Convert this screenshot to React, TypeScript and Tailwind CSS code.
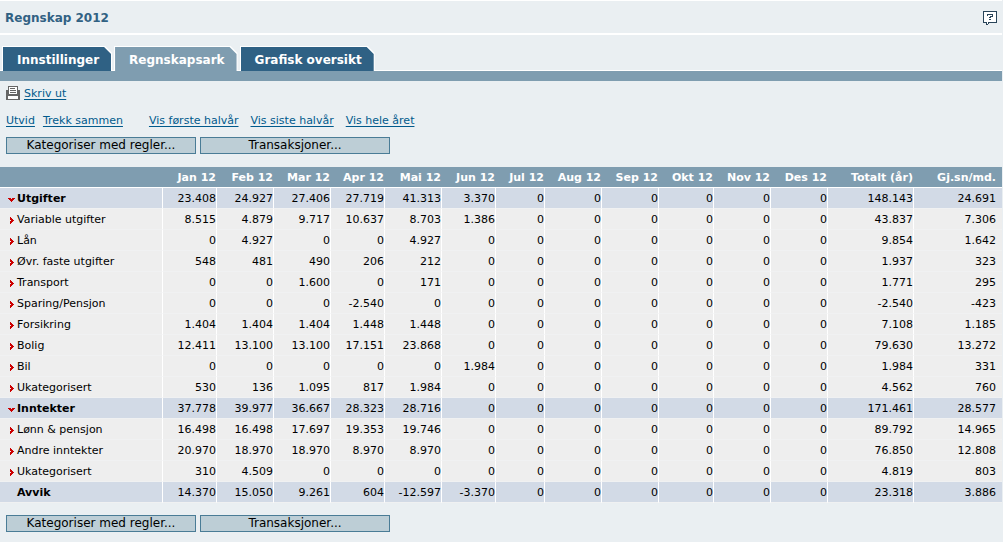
import { clsx } from "clsx";

type Row = {
  name: string;
  values: string[];
  kind: "group" | "item" | "sum";
};

const columns = [
  "Jan 12",
  "Feb 12",
  "Mar 12",
  "Apr 12",
  "Mai 12",
  "Jun 12",
  "Jul 12",
  "Aug 12",
  "Sep 12",
  "Okt 12",
  "Nov 12",
  "Des 12",
  "Totalt (år)",
  "Gj.sn/md.",
];

const columnWidths = [
  "w-[163px]",
  "w-[54px]",
  "w-[57px]",
  "w-[57px]",
  "w-[54px]",
  "w-[57px]",
  "w-[54px]",
  "w-[49px]",
  "w-[57px]",
  "w-[57px]",
  "w-[55px]",
  "w-[57px]",
  "w-[57px]",
  "w-[86px]",
  "w-[88px]",
];

// Jan-Jun, total and monthly average; Jul-Des have no bookings yet
function row(kind: Row["kind"], name: string, booked: string, totals: string): Row {
  return {
    kind,
    name,
    values: [...booked.split(" "), "0", "0", "0", "0", "0", "0", ...totals.split(" ")],
  };
}

const rows: Row[] = [
  row("group", "Utgifter", "23.408 24.927 27.406 27.719 41.313 3.370", "148.143 24.691"),
  row("item", "Variable utgifter", "8.515 4.879 9.717 10.637 8.703 1.386", "43.837 7.306"),
  row("item", "Lån", "0 4.927 0 0 4.927 0", "9.854 1.642"),
  row("item", "Øvr. faste utgifter", "548 481 490 206 212 0", "1.937 323"),
  row("item", "Transport", "0 0 1.600 0 171 0", "1.771 295"),
  row("item", "Sparing/Pensjon", "0 0 0 -2.540 0 0", "-2.540 -423"),
  row("item", "Forsikring", "1.404 1.404 1.404 1.448 1.448 0", "7.108 1.185"),
  row("item", "Bolig", "12.411 13.100 13.100 17.151 23.868 0", "79.630 13.272"),
  row("item", "Bil", "0 0 0 0 0 1.984", "1.984 331"),
  row("item", "Ukategorisert", "530 136 1.095 817 1.984 0", "4.562 760"),
  row("group", "Inntekter", "37.778 39.977 36.667 28.323 28.716 0", "171.461 28.577"),
  row("item", "Lønn & pensjon", "16.498 16.498 17.697 19.353 19.746 0", "89.792 14.965"),
  row("item", "Andre inntekter", "20.970 18.970 18.970 8.970 8.970 0", "76.850 12.808"),
  row("item", "Ukategorisert", "310 4.509 0 0 0 0", "4.819 803"),
  row("sum", "Avvik", "14.370 15.050 9.261 604 -12.597 -3.370", "23.318 3.886"),
];

function HelpIcon() {
  return (
    <svg width="14" height="14" viewBox="0 0 14 14" shapeRendering="crispEdges" aria-hidden="true">
      <path fill="#fff" d="M1 1h12v10H1zM4 11h1v2H4z" />
      <path
        fill="#294459"
        fillRule="evenodd"
        d="M0 0h14v12H6v1H5v1H3v-2H0zM1 1v10h3v2h1v-2h8V1z"
      />
      <path fill="#294459" d="M4 3h6v3H7V5h2V4H5v1H4zM6 6h2v1H6zM6 8h2v1H6z" />
    </svg>
  );
}

function PrinterIcon() {
  return (
    <svg width="14" height="14" viewBox="0 0 14 14" shapeRendering="crispEdges" aria-hidden="true">
      <path fill="#666" d="M2 0h10v4h2v10H0V4h2z" />
      <path fill="#fff" d="M3 1h8v7H3zM2 10h10v3H2z" />
      <path fill="#666" d="M4 2h5v1H4zM4 4h6v1H4zM4 6h6v1H4z" />
    </svg>
  );
}

function Arrow({ open }: { open: boolean }) {
  return (
    <svg width="7" height="7" viewBox="0 0 7 7" shapeRendering="crispEdges" aria-hidden="true">
      <path
        fill="#c00"
        d={
          open
            ? "M0 2h3v1h1V2h3v1H6v1H5v1H4v1H3V5H2V4H1V3H0z"
            : "M2 0h1v1h1v1h1v1h1v1H5v1H4v1H3v1H2V4h1V3H2z"
        }
      />
      {!open && <path fill="#c00" d="M2 1h2v2H2zM2 4h2v2H2zM3 3h2v1H3z" />}
    </svg>
  );
}

function Tab({ label, active = false }: { label: string; active?: boolean }) {
  return (
    <a
      href="#"
      className="-mb-px block bg-white px-px pt-px text-[12px] font-bold text-white [clip-path:polygon(0_0,calc(100%-7px)_0,100%_7px,100%_100%,0_100%)]"
    >
      <span
        className={clsx(
          "block h-6 pr-3 pl-3.5 leading-[26px]",
          "[clip-path:polygon(0_0,calc(100%-7px)_0,100%_7px,100%_100%,0_100%)]",
          active ? "bg-[#7f9db0]" : "bg-[#2f6184]"
        )}
      >
        {label}
      </span>
    </a>
  );
}

function Actions() {
  const button =
    "h-[17px] w-[190px] border border-[#4a7c96] bg-[#bdced6] text-[12px] leading-[15px] text-black";
  return (
    <div className="flex gap-1 px-1.5">
      <button type="button" className={button}>
        Kategoriser med regler...
      </button>
      <button type="button" className={button}>
        Transaksjoner...
      </button>
    </div>
  );
}

function Link({ children }: { children: string }) {
  return (
    <a href="#" className="text-[#005a8c] underline underline-offset-2">
      {children}
    </a>
  );
}

export default function App() {
  return (
    <div className="min-h-screen bg-[#eaeff2] pr-px font-['Verdana','DejaVu_Sans',sans-serif] text-[11px] leading-[14px] text-black">
      <header className="flex h-[35px] items-center justify-between border-t border-b-2 border-t-white border-b-white px-[5px] pt-0.5">
        <h1 className="text-[12px] font-bold text-[#316183]">Regnskap 2012</h1>
        <button type="button" aria-label="Hjelp">
          <HelpIcon />
        </button>
      </header>

      <nav className="mt-[11px] flex gap-0.5 border-b border-white pl-0.5">
        <Tab label="Innstillinger" />
        <Tab label="Regnskapsark" active />
        <Tab label="Grafisk oversikt" />
      </nav>
      <div className="h-2.5 bg-[#7f9db0]" />

      <div className="flex items-start gap-1 px-1.5 pt-[5px] leading-4">
        <PrinterIcon />
        <Link>Skriv ut</Link>
      </div>
      <div className="mt-3 mb-[9px] flex gap-2 px-1.5">
        <Link>Utvid</Link>
        <Link>Trekk sammen</Link>
        <span className="flex gap-3 pl-[18px]">
          <Link>Vis første halvår</Link>
          <Link>Vis siste halvår</Link>
          <Link>Vis hele året</Link>
        </span>
      </div>

      <Actions />

      <table className="mt-[13px] mb-3 w-full table-fixed border-separate border-spacing-0">
        <colgroup>
          {columnWidths.map((width, i) => (
            <col key={i} className={width} />
          ))}
        </colgroup>
        <thead>
          <tr className="h-[21px] bg-[#7f9db0] text-right text-white">
            <td className="border-b border-white" />
            {columns.map((column) => (
              <th
                key={column}
                scope="col"
                className="border-b border-white p-0 pt-0.5 pr-px whitespace-nowrap last:pr-1.5"
              >
                {column}
              </th>
            ))}
          </tr>
        </thead>
        <tbody>
          {rows.map((r, i) => (
            <tr key={i} className={clsx("h-[21px]", r.kind === "item" ? "bg-[#eee]" : "bg-[#d2dae6]")}>
              <th
                scope="row"
                className={clsx(
                  "border-r border-b border-r-white border-b-[#f0f1f2] p-0 pt-0.5 text-left",
                  r.kind === "item" ? "font-normal" : "font-bold"
                )}
              >
                {r.kind === "sum" ? (
                  <span className="pl-[17px]">{r.name}</span>
                ) : (
                  <button type="button" className="flex items-start gap-0.5 pl-2">
                    <span className="pt-1">
                      <Arrow open={r.kind === "group"} />
                    </span>
                    {r.name}
                  </button>
                )}
              </th>
              {r.values.map((value, j) => (
                <td
                  key={j}
                  className="border-r border-b border-r-white border-b-[#f0f1f2] p-0 pt-0.5 text-right last:border-r-0 last:pr-1.5"
                >
                  {value}
                </td>
              ))}
            </tr>
          ))}
        </tbody>
      </table>

      <Actions />
    </div>
  );
}
